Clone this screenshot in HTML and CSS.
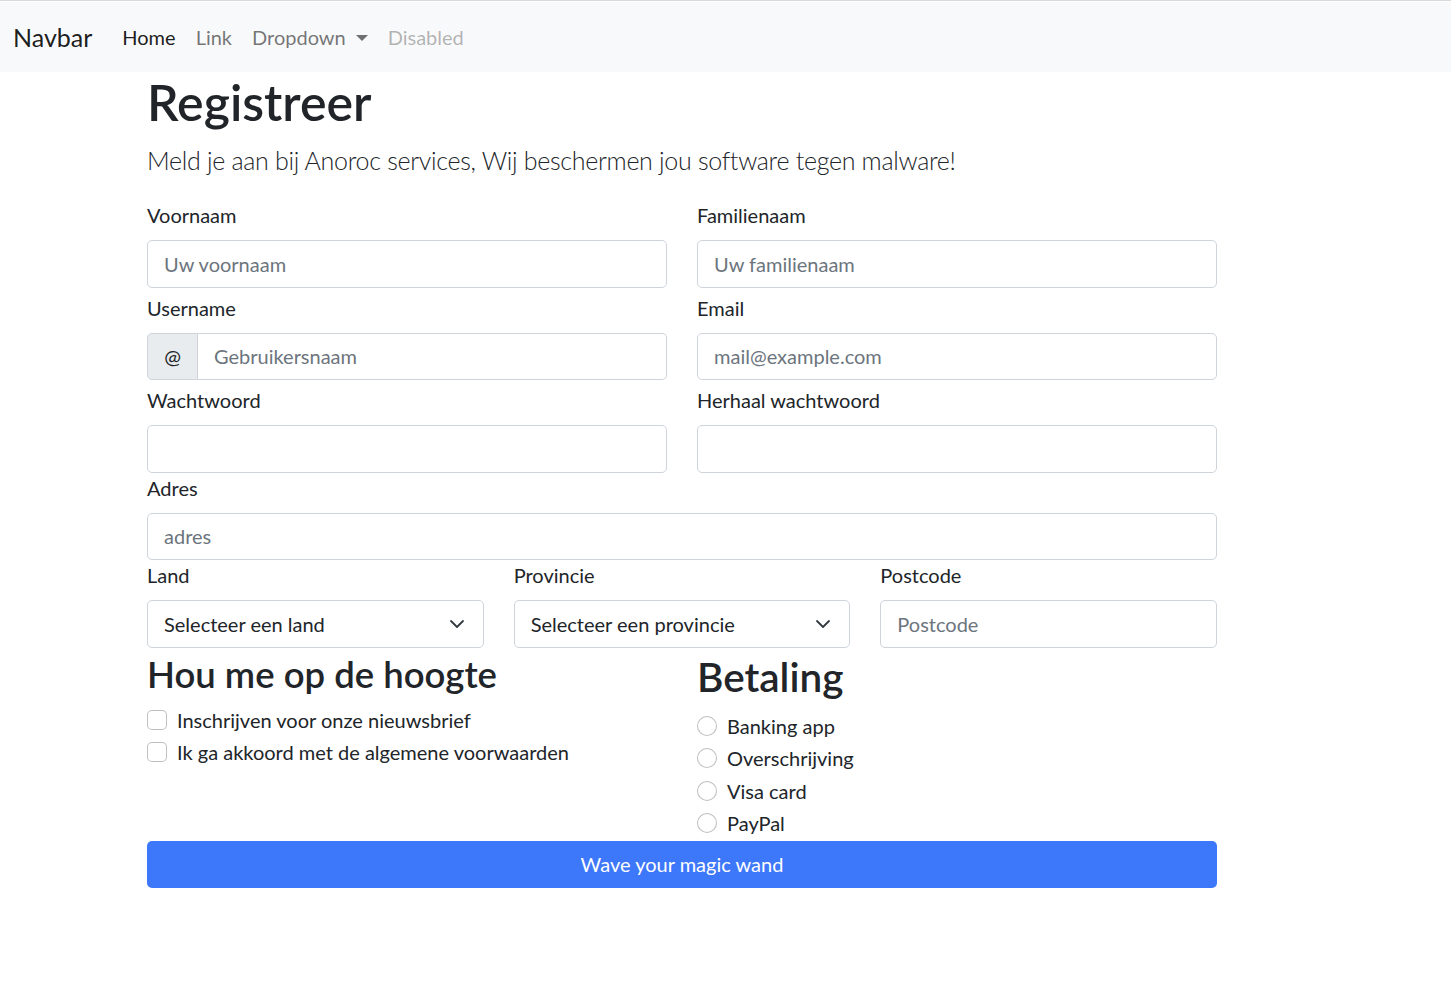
FILE: index.html
```html
<!DOCTYPE html>
<html lang="nl">
<head>
<meta charset="utf-8">
<title>Registreer</title>
<link rel="stylesheet" href="styles.css">
</head>
<body>
<nav class="navbar">
  <a class="brand" href="#">Navbar</a>
  <ul class="nav">
    <li><a class="nav-link active" href="#">Home</a></li>
    <li><a class="nav-link" href="#">Link</a></li>
    <li><a class="nav-link dropdown" href="#">Dropdown<span class="caret"></span></a></li>
    <li><a class="nav-link disabled" href="#">Disabled</a></li>
  </ul>
</nav>
<main class="container">
  <h1 class="title">Registreer</h1>
  <p class="lead">Meld je aan bij Anoroc services, Wij beschermen jou software tegen malware!</p>
  <form class="form">
    <div class="row two">
      <div class="field"><label class="label">Voornaam</label><input class="control" placeholder="Uw voornaam"></div>
      <div class="field"><label class="label">Familienaam</label><input class="control" placeholder="Uw familienaam"></div>
    </div>
    <div class="row two spaced">
      <div class="field"><label class="label">Username</label>
        <div class="group"><span class="group-text">@</span><input class="control group-input" placeholder="Gebruikersnaam"></div>
      </div>
      <div class="field"><label class="label">Email</label><input class="control" placeholder="mail@example.com"></div>
    </div>
    <div class="row two spaced">
      <div class="field"><label class="label">Wachtwoord</label><input class="control" type="password"></div>
      <div class="field"><label class="label">Herhaal wachtwoord</label><input class="control" type="password"></div>
    </div>
    <div class="row one">
      <div class="field"><label class="label">Adres</label><input class="control" placeholder="adres"></div>
    </div>
    <div class="row three">
      <div class="field"><label class="label">Land</label>
        <div class="select"><span>Selecteer een land</span><svg class="chev" viewBox="0 0 16 16" width="16" height="16"><path d="M2 5l6 6 6-6" fill="none" stroke="#343a40" stroke-width="1.8" stroke-linecap="round" stroke-linejoin="round"/></svg></div>
      </div>
      <div class="field"><label class="label">Provincie</label>
        <div class="select"><span>Selecteer een provincie</span><svg class="chev" viewBox="0 0 16 16" width="16" height="16"><path d="M2 5l6 6 6-6" fill="none" stroke="#343a40" stroke-width="1.8" stroke-linecap="round" stroke-linejoin="round"/></svg></div>
      </div>
      <div class="field"><label class="label">Postcode</label><input class="control" placeholder="Postcode"></div>
    </div>
    <div class="row two options">
      <div class="col">
        <h3 class="h3">Hou me op de hoogte</h3>
        <div class="check"><span class="box"></span><span>Inschrijven voor onze nieuwsbrief</span></div>
        <div class="check"><span class="box"></span><span>Ik ga akkoord met de algemene voorwaarden</span></div>
      </div>
      <div class="col">
        <h2 class="h2">Betaling</h2>
        <div class="check"><span class="box radio"></span><span>Banking app</span></div>
        <div class="check"><span class="box radio"></span><span>Overschrijving</span></div>
        <div class="check"><span class="box radio"></span><span>Visa card</span></div>
        <div class="check"><span class="box radio"></span><span>PayPal</span></div>
      </div>
    </div>
    <button class="btn" type="button">Wave your magic wand</button>
  </form>
</main>
</body>
</html>
```
FILE: styles.css
```css
* { box-sizing: border-box; }
html, body { margin: 0; padding: 0; }
body {
  font-family: "Lato", "Segoe UI", "Noto Sans", sans-serif;
  font-size: 20px;
  line-height: 30px;
  color: #212529;
  background: #fff;
  border-top: 1px solid #d9d9d9;
}
a { text-decoration: none; }
.navbar {
  display: flex;
  align-items: center;
  height: 70px;
  padding: 0 15px 0 13px;
  background: #f8f9fa;
  margin-top: 1px;
}
.brand {
  font-size: 25px;
  line-height: 37px;
  color: rgba(0,0,0,.9);
  margin-right: 20px;
}
.nav { display: flex; list-style: none; margin: 0; padding: 0; }
.nav-link {
  display: block;
  padding: 0 10px;
  font-size: 20px;
  color: rgba(0,0,0,.55);
}
.nav-link.active { color: rgba(0,0,0,.9); }
.nav-link.disabled { color: rgba(0,0,0,.3); }
.caret {
  display: inline-block;
  margin-left: 10px;
  vertical-align: 4px;
  border-top: 6px solid rgba(0,0,0,.55);
  border-left: 6px solid transparent;
  border-right: 6px solid transparent;
}
.container { width: 1070px; margin-left: 147px; }
.title {
  font-size: 50px;
  line-height: 60px;
  font-weight: 600;
  margin: 0 0 10px;
}
.lead {
  font-size: 25px;
  line-height: 37px;
  font-weight: 300;
  letter-spacing: -0.3px;
  margin: 0 0 21px;
}
.form { display: flex; flex-direction: column; }
.row { display: grid; column-gap: 30px; }
.two { grid-template-columns: 1fr 1fr; }
.one { grid-template-columns: 1fr; }
.three { grid-template-columns: 1fr 1fr 1fr; }
.spaced { margin-top: 5px; }
.label { display: block; margin-bottom: 10px; line-height: 30px; }
.control {
  display: block;
  width: 100%;
  height: 47.5px;
  padding: 0 16px;
  font: inherit;
  color: #212529;
  border: 1px solid #ced4da;
  border-radius: 5px;
  background: #fff;
  outline: none;
}
.control::placeholder { color: #6c757d; }
.group { display: flex; }
.group-text {
  width: 51px;
  height: 47.5px;
  display: flex;
  align-items: center;
  justify-content: center;
  background: #e9ecef;
  border: 1px solid #ced4da;
  border-radius: 5px 0 0 5px;
}
.group-input { flex: 1; border-left: 0; border-radius: 0 5px 5px 0; }
.select {
  height: 47.5px;
  display: flex;
  align-items: center;
  justify-content: space-between;
  padding: 0 18px 0 16px;
  border: 1px solid #ced4da;
  border-radius: 5px;
}
.chev { display: block; }
.options { margin-top: 5px; }
.h3 { font-size: 36.5px; line-height: 42px; font-weight: 600; margin: 0 0 10px; }
.h2 { font-size: 40.5px; line-height: 48px; font-weight: 600; margin: 0 0 10px; }
.check {
  display: flex;
  align-items: center;
  gap: 10px;
  height: 30px;
  margin-bottom: 2.5px;
}
.box {
  width: 20px;
  height: 20px;
  flex: none;
  border: 1px solid rgba(0,0,0,.25);
  border-radius: 5px;
  background: #fff;
}
.box.radio { border-radius: 50%; }
.btn {
  display: block;
  width: 100%;
  height: 47.5px;
  font: inherit;
  color: #fff;
  background: #3d77fa;
  border: 0;
  border-radius: 5px;
}
```
